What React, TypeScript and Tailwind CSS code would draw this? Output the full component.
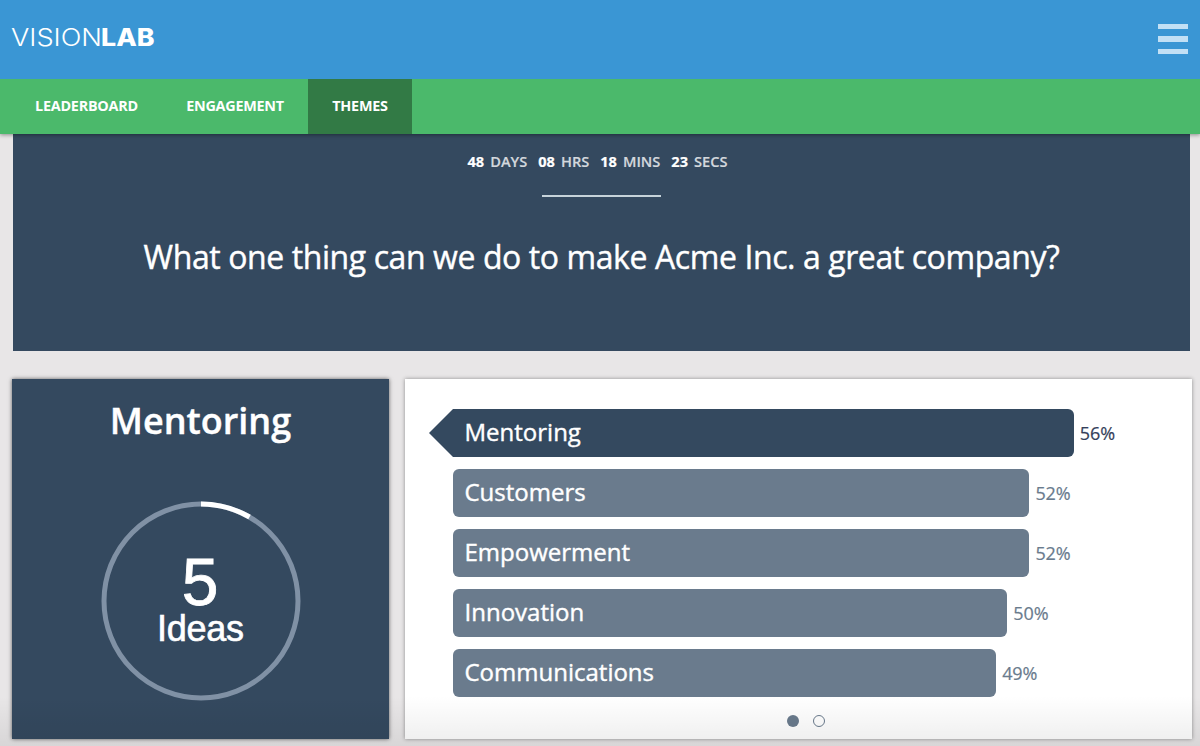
import React from 'react';
import clsx from 'clsx';

const tabs = [
  { label: 'Leaderboard', width: 'w-[151px]' },
  { label: 'Engagement', width: 'w-[146px]' },
  { label: 'Themes', width: 'w-[104px]', active: true },
];

const countdown = [
  { value: '48', unit: 'DAYS' },
  { value: '08', unit: 'HRS' },
  { value: '18', unit: 'MINS' },
  { value: '23', unit: 'SECS' },
];

const themes = [
  { name: 'Mentoring', percent: 56 },
  { name: 'Customers', percent: 52 },
  { name: 'Empowerment', percent: 52 },
  { name: 'Innovation', percent: 50 },
  { name: 'Communications', percent: 49 },
];

const PX_PER_PERCENT = 11.085;

function Logo() {
  return (
    <svg width="150" height="40" viewBox="0 0 150 40" className="mt-[-5px]" fill="#fff">
      <text x="1" y="29" textLength="91" lengthAdjust="spacingAndGlyphs" className="font-[Inter,sans-serif] text-[24px] font-light">
        VISION
      </text>
      <text x="91" y="29" textLength="53.5" lengthAdjust="spacingAndGlyphs" className="font-[Inter,sans-serif] text-[24px] font-extrabold">
        LAB
      </text>
    </svg>
  );
}

function Header() {
  return (
    <header className="relative z-20 flex h-[79px] items-center justify-between bg-[#3a96d4] pr-3 pl-[10px]">
      <Logo />
      <button type="button" aria-label="Menu" className="mt-[-1px] flex flex-col gap-[7px]">
        <span className="h-[5.6px] w-[30px] bg-[#c2e0f5]" />
        <span className="h-[5.6px] w-[30px] bg-[#c2e0f5]" />
        <span className="h-[5.6px] w-[30px] bg-[#c2e0f5]" />
      </button>
    </header>
  );
}

function Nav() {
  return (
    <nav className="relative z-10 flex h-[55px] bg-[#4bb96b] pl-[11px] shadow-[0_1px_4px_rgba(0,0,0,0.4)]">
      {tabs.map((tab) => (
        <a
          key={tab.label}
          className={clsx(
            'flex items-center justify-center pb-[2px] text-[14.4px] font-bold tracking-[-0.25px] text-white uppercase',
            tab.width,
            tab.active && 'bg-[#327a45]',
          )}
        >
          {tab.label}
        </a>
      ))}
    </nav>
  );
}

function Question() {
  return (
    <section className="mr-[10px] ml-[13px] flex h-[217px] flex-col items-center bg-[#34495f]">
      <div className="mt-[17px] mr-[8px] flex gap-[11px] text-[14.6px] leading-5 font-semibold text-[#d3d8dd] [-webkit-text-stroke:0.2px]">
        {countdown.map((item) => (
          <div key={item.unit} className="flex gap-[6px]">
            <span className="font-bold text-white">{item.value}</span>
            <span>{item.unit}</span>
          </div>
        ))}
      </div>
      <div className="mt-[24px] h-[1.5px] w-[119px] bg-[#c6d3da]" />
      <h1 className="mt-[38px] text-[32px] leading-[44px] tracking-[-0.41px] whitespace-nowrap text-white [-webkit-text-stroke:0.4px]">
        What one thing can we do to make Acme Inc. a great company?
      </h1>
    </section>
  );
}

function IdeasRing() {
  const radius = 97;
  const length = 2 * Math.PI * radius;

  return (
    <svg width="200" height="200" viewBox="0 0 200 200" className="font-['Liberation_Sans',Arial,sans-serif]">
      <circle cx="100" cy="100" r={radius} fill="none" stroke="#8091a5" strokeWidth="5" />
      <circle
        cx="100"
        cy="100"
        r={radius}
        fill="none"
        stroke="#fff"
        strokeWidth="5"
        strokeDasharray={`${length / 12} ${length}`}
        transform="rotate(-90 100 100)"
      />
      <text x="99" y="103.5" textAnchor="middle" fill="#fff" stroke="#fff" strokeWidth="0.8" className="text-[66px]">5</text>
      <text x="99.5" y="140" textAnchor="middle" fill="#fff" stroke="#fff" strokeWidth="0.6" className="text-[36px]" textLength="87">Ideas</text>
    </svg>
  );
}

function ThemeCard() {
  return (
    <section className="flex w-[377px] flex-col items-center bg-[#34495f] shadow-[0_0_4px_rgba(0,0,0,0.6)]">
      <h2 className="mt-[17px] mb-[55px] text-[36px] leading-[50px] font-semibold text-white [-webkit-text-stroke:0.4px]">
        Mentoring
      </h2>
      <IdeasRing />
    </section>
  );
}

function ThemeBars() {
  const [selected, setSelected] = React.useState('Mentoring');

  return (
    <section className="flex w-[787px] flex-col bg-white pt-[30px] pl-6 shadow-[0_0_4px_rgba(0,0,0,0.4)]">
      <ul className="flex flex-col gap-3">
        {themes.map((theme) => {
          const active = theme.name === selected;
          return (
            <li key={theme.name} className="flex h-12 items-center" onClick={() => setSelected(theme.name)}>
              <span
                className={clsx(
                  'h-0 w-0 border-y-[24px] border-r-[24px] border-y-transparent',
                  active ? 'border-r-[#34495f]' : 'border-r-transparent',
                )}
              />
              <div
                className={clsx(
                  'flex h-12 items-center pb-[2px] pl-[11.5px] text-[24px] text-white [-webkit-text-stroke:0.4px]',
                  active ? 'rounded-r-md bg-[#34495f]' : 'rounded-md bg-[#6a7b8d]',
                )}
                style={{ width: theme.percent * PX_PER_PERCENT }}
              >
                {theme.name}
              </div>
              <span className={clsx('ml-[6px] pt-px text-[18px] tracking-[-0.1px] [-webkit-text-stroke:0.2px]', active ? 'text-[#34405a]' : 'text-[#6a7b8d]')}>
                {theme.percent}%
              </span>
            </li>
          );
        })}
      </ul>
      <div className="mt-[18px] flex justify-center gap-[14px] pr-[9px]">
        <span className="h-3 w-3 rounded-full bg-[#6a7b8d]" />
        <span className="h-3 w-3 rounded-full border border-[#6a7b8d] bg-white" />
      </div>
    </section>
  );
}

export default function App() {
  return (
    <div className="relative h-[746px] w-[1200px] overflow-hidden bg-[#e8e6e7] font-['Open_Sans','Noto_Sans',sans-serif]">
      <Header />
      <Nav />
      <Question />
      <main className="mt-[28px] flex h-[360px] gap-4 pl-[12px]">
        <ThemeCard />
        <ThemeBars />
      </main>
      {/* fade along the bottom edge of the window */}
      <div className="pointer-events-none absolute inset-x-0 bottom-0 h-[50px] bg-linear-to-b from-transparent to-black/7" />
    </div>
  );
}
